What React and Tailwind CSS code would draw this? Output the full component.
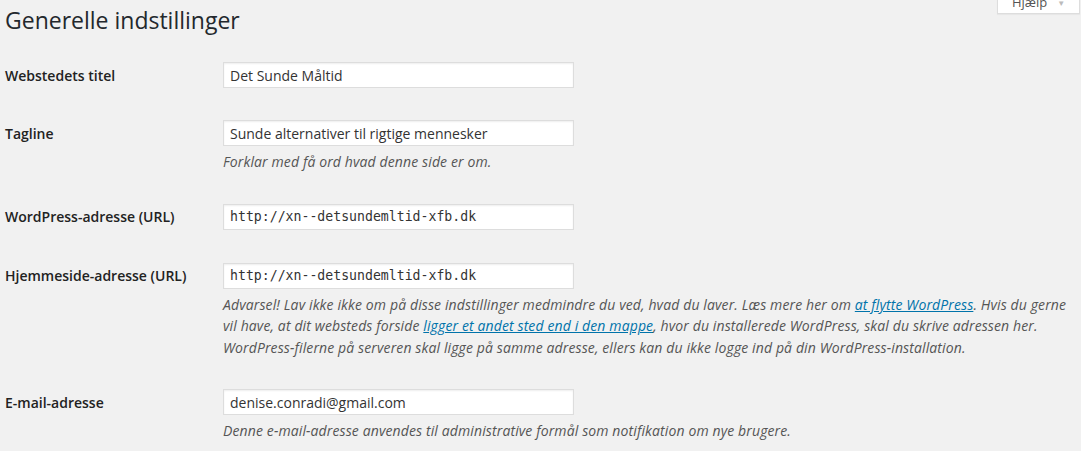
const font = { fontFamily: '"Open Sans", "Noto Sans", sans-serif' };

function Field({ value, mono }) {
  return (
    <div
      className={
        "flex h-[26px] w-[351px] items-center border border-[#ddd] bg-white px-[6px] text-[#333] shadow-[inset_0_1px_2px_rgba(0,0,0,0.07)] " +
        (mono ? "font-['DejaVu_Sans_Mono',monospace] text-[13.2px]" : "text-[14px]")
      }
    >
      {value}
    </div>
  );
}

function Row({ label, value, mono, children, className = "" }) {
  return (
    <div className={"grid grid-cols-[218px_1fr] py-[16px] " + className}>
      <div className="flex h-[26px] items-center text-[14px] font-semibold text-[#222]">
        {label}
      </div>
      <div>
        <Field value={value} mono={mono} />
        {children && (
          <p className="mt-[5px] text-[14px] italic leading-[21.5px] tracking-[0.12px] text-[#555]">
            {children}
          </p>
        )}
      </div>
    </div>
  );
}

function Link({ children }) {
  return <a className="text-[#0073aa] underline">{children}</a>;
}

export default function App() {
  return (
    <div className="relative min-h-screen bg-[#f1f1f1] pl-[5px]" style={font}>
      <div className="absolute right-[1px] top-[-8px] flex h-[22px] w-[83px] items-center justify-center gap-[10px] border border-[#ddd] bg-white text-[13px] text-[#555] shadow-[0_1px_1px_rgba(0,0,0,0.04)]">
        <span>Hjælp</span>
        <span className="text-[8px] text-[#bbb]">▼</span>
      </div>

      <h1 className="pt-[5px] text-[23px] leading-[30px] font-normal text-[#23282d]">
        Generelle indstillinger
      </h1>

      <div className="mt-[11px]">
        <Row label="Webstedets titel" value="Det Sunde Måltid" />
        <Row label="Tagline" value="Sunde alternativer til rigtige mennesker" className="pb-[15px]">
          Forklar med få ord hvad denne side er om.
        </Row>
        <Row label="WordPress-adresse (URL)" value="http://xn--detsundemltid-xfb.dk" mono className="pb-[17px]" />
        <Row label="Hjemmeside-adresse (URL)" value="http://xn--detsundemltid-xfb.dk" mono className="pb-[15px]">
          Advarsel! Lav ikke ikke om på disse indstillinger medmindre du ved, hvad du laver. Læs mere her om{" "}
          <Link>at flytte WordPress</Link>. Hvis du gerne
          <br />
          vil have, at dit websteds forside <Link>ligger et andet sted end i den mappe</Link>, hvor du installerede
          WordPress, skal du skrive adressen her.
          <br />
          WordPress-filerne på serveren skal ligge på samme adresse, ellers kan du ikke logge ind på din
          WordPress-installation.
        </Row>
        <Row label="E-mail-adresse" value="denise.conradi@gmail.com">
          Denne e-mail-adresse anvendes til administrative formål som notifikation om nye brugere.
        </Row>
      </div>
    </div>
  );
}
